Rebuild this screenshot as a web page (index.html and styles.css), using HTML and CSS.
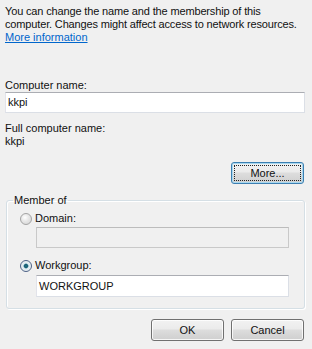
FILE: index.html
```html
<!DOCTYPE html>
<html>
<head>
<meta charset="utf-8">
<link rel="stylesheet" href="styles.css">
</head>
<body>
<div class="dialog">
  <p class="intro">You can change the name and the membership of this<br>computer. Changes might affect access to network resources.</p>
  <a href="#" class="link">More information</a>

  <div class="label label-name">Computer name:</div>
  <div class="textbox">kkpi</div>

  <div class="label label-full">Full computer name:</div>
  <div class="label">kkpi</div>

  <div class="more-row">
    <button class="btn btn-default"><span class="focus">More...</span></button>
  </div>

  <fieldset class="group">
    <legend class="group-title">Member of</legend>
    <div class="radio-row">
      <span class="radio"></span>
      <span class="radio-label">Domain:</span>
    </div>
    <div class="textbox textbox-disabled textbox-indent"></div>
    <div class="radio-row radio-row-wg">
      <span class="radio radio-checked"></span>
      <span class="radio-label">Workgroup:</span>
    </div>
    <div class="textbox textbox-indent textbox-wg">WORKGROUP</div>
  </fieldset>

  <div class="actions">
    <button class="btn">OK</button>
    <button class="btn">Cancel</button>
  </div>
</div>
</body>
</html>
```

FILE: styles.css
```css
html, body {
  margin: 0;
  padding: 0;
  background: #f0f0f0;
}

body {
  font-family: "Liberation Sans", Arial, sans-serif;
  font-size: 11px;
  line-height: 13px;
  color: #111;
}

.dialog {
  width: 300px;
  padding: 5px 7px 0 5px;
}

.intro {
  margin: 0;
  white-space: nowrap;
  letter-spacing: -0.15px;
}

.link {
  display: block;
  width: max-content;
  color: #0066cc;
  text-decoration: underline;
}

.label {
  height: 13px;
}

.label-name {
  margin-top: 35px;
}

.label-full {
  margin-top: 9px;
}

.textbox {
  box-sizing: border-box;
  height: 21px;
  background: #fff;
  border: 1px solid #dbdfe6;
  border-top-color: #abadb3;
  border-left-color: #e2e3ea;
  padding: 3px 2px 0 2px;
}

.textbox-disabled {
  background: #f0f0f0;
  border-color: #c9c9c9;
  border-top-color: #bcbcbc;
}

.textbox-indent {
  margin-left: 29px;
  width: 253px;
}

.textbox-wg {
  height: 22px;
  padding-top: 4px;
}

.more-row {
  display: flex;
  justify-content: flex-end;
  margin-top: 14px;
  padding-right: 1px;
}

.btn {
  box-sizing: border-box;
  height: 22px;
  width: 73px;
  padding: 0;
  font-family: "Liberation Sans", Arial, sans-serif;
  font-size: 11px;
  color: #111;
  border: 1px solid #707070;
  border-radius: 3px;
  background: linear-gradient(#f2f2f2 0%, #ebebeb 45%, #dddddd 50%, #cfcfcf 100%);
  box-shadow: inset 0 0 0 1px rgba(255, 255, 255, 0.8);
  display: flex;
  align-items: center;
  justify-content: center;
}

.btn-default {
  border-color: #3c7fb1;
  box-shadow: inset 0 0 0 1px #a8d8f0;
  padding: 2px;
}

.focus {
  flex: 1;
  align-self: stretch;
  display: flex;
  align-items: center;
  justify-content: center;
  border: 1px dotted #222;
}

.group {
  margin: 10px 0 0 1px;
  padding: 0 0 11px 0;
  border: 1px solid #d5dfe5;
  border-radius: 3px;
  box-shadow: inset 1px 1px 0 #fff, 1px 1px 0 #fff;
}

.group-title {
  margin-left: 6px;
  padding: 0 1px;
  line-height: 13px;
}

.radio-row {
  display: flex;
  align-items: center;
  height: 13px;
  margin-top: 5px;
  margin-left: 13px;
  margin-bottom: 2px;
}

.radio-row-wg {
  margin-top: 11px;
  margin-bottom: 3px;
}

.radio {
  box-sizing: border-box;
  width: 12px;
  height: 12px;
  border-radius: 50%;
  border: 1px solid #a4a4a4;
  background: radial-gradient(circle at 40% 35%, #ffffff 0%, #e6e6e6 45%, #d2d2d2 100%);
  margin-right: 3px;
}

.radio-checked {
  border-color: #4d6185;
  background: radial-gradient(circle, #1f7288 0%, #1a5e73 22%, #6aa6b8 32%, #dfe9ee 40%, #f4f8fa 100%);
}

.radio-label {
  line-height: 13px;
}

.actions {
  display: flex;
  justify-content: flex-end;
  gap: 7px;
  margin-top: 10px;
  padding-right: 1px;
}
```
